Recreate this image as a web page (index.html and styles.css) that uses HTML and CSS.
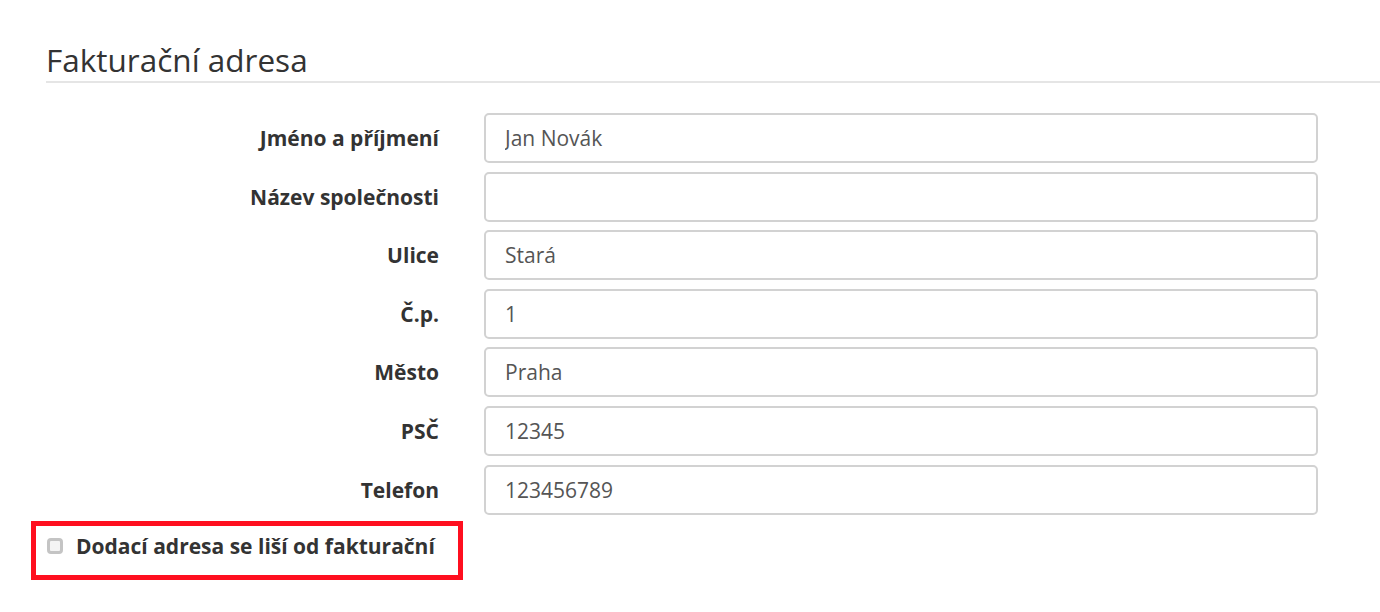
FILE: index.html
```html
<!DOCTYPE html>
<html lang="cs">
<head>
<meta charset="utf-8">
<title>Fakturační adresa</title>
<link rel="stylesheet" href="styles.css">
</head>
<body>
<div class="page">
  <h2 class="title">Fakturační adresa</h2>
  <form class="form">
    <div class="row"><label class="lbl">Jméno a příjmení</label><input class="ctl" type="text" value="Jan Novák"></div>
    <div class="row"><label class="lbl">Název společnosti</label><input class="ctl" type="text" value=""></div>
    <div class="row"><label class="lbl">Ulice</label><input class="ctl" type="text" value="Stará"></div>
    <div class="row"><label class="lbl">Č.p.</label><input class="ctl" type="text" value="1"></div>
    <div class="row"><label class="lbl">Město</label><input class="ctl" type="text" value="Praha"></div>
    <div class="row"><label class="lbl">PSČ</label><input class="ctl" type="text" value="12345"></div>
    <div class="row"><label class="lbl">Telefon</label><input class="ctl" type="text" value="123456789"></div>
    <div class="check-row">
      <label class="check"><span class="box"></span><span class="check-text">Dodací adresa se liší od fakturační</span></label>
      <div class="highlight"></div>
    </div>
  </form>
</div>
</body>
</html>
```
FILE: styles.css
```css
html, body {
  margin: 0;
  padding: 0;
  background: #fff;
}
body {
  font-family: "Open Sans", "DejaVu Sans", sans-serif;
  color: #333;
  min-height: 612px;
}
.page {
  padding: 40px 0 40px 46px;
}
.title {
  margin: 0;
  font-size: 31.5px;
  font-weight: 400;
  line-height: 40px;
  color: #333;
  padding-bottom: 1px;
  border-bottom: 2px solid #e5e5e5;
}
.form {
  margin-top: 30px;
}
.row {
  display: grid;
  grid-template-columns: 393px 834px;
  column-gap: 45px;
  align-items: center;
  margin-bottom: 8.6px;
}
.lbl {
  text-align: right;
  font-weight: 700;
  font-size: 21px;
  color: #333;
}
.ctl {
  box-sizing: border-box;
  height: 50px;
  width: 834px;
  margin: 0;
  border: 2px solid #d2d2d2;
  border-radius: 5px;
  padding: 0 19px;
  font-family: "Open Sans", "DejaVu Sans", sans-serif;
  font-size: 21px;
  color: #555;
  background: #fff;
  outline: none;
}
.check-row {
  position: relative;
  padding-top: 9px;
  padding-bottom: 20px;
}
.check {
  display: flex;
  align-items: center;
  gap: 13px;
  padding-left: 1px;
}
.box {
  box-sizing: border-box;
  width: 16px;
  height: 16px;
  border: 3px solid #c4c4c4;
  border-radius: 4px;
  background: #f4f4f4;
}
.check-text {
  font-weight: 700;
  font-size: 21px;
  color: #333;
}
.highlight {
  position: absolute;
  left: -15px;
  top: -2.5px;
  width: 432px;
  height: 59px;
  box-sizing: border-box;
  border: 5px solid #ff0f1f;
}
```
